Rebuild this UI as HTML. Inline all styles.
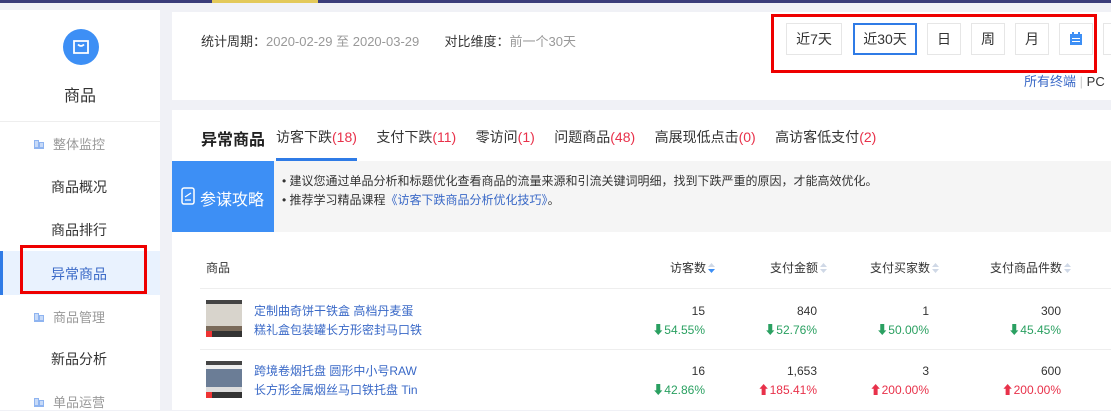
<!DOCTYPE html>
<html><head><meta charset="utf-8"><style>
*{margin:0;padding:0;box-sizing:border-box}
body{width:1111px;height:410px;overflow:hidden;background:#f0f1f6;font-family:"Liberation Sans","Noto Sans CJK SC",sans-serif;font-size:13px;color:#333;position:relative}
.a{position:absolute;white-space:nowrap}
.btn{position:absolute;top:23px;height:32px;border:1px solid #e6e6e6;background:#fff;text-align:center;line-height:30px;font-size:14px;color:#333}
.side{font-size:14px;color:#333}
.grp{font-size:13px;color:#999}
.ic{display:inline-block;margin-right:8px;vertical-align:-1px}
.g{color:#2aa061}.r{color:#e8314a}
.num{position:absolute;text-align:right;font-size:12px}
.blue{color:#3a69c7}
.so{display:inline-block;margin-left:2px;vertical-align:-1px}
</style></head><body>
<div class="a" style="left:0;top:0;width:1111px;height:3px;background:#3b3d7a"></div>
<div class="a" style="left:212px;top:0;width:106px;height:3px;background:#e3c95a"></div>
<!-- sidebar -->
<div class="a" style="left:0;top:10px;width:160px;height:400px;background:#fff"></div>
<div class="a" style="left:63px;top:29px;width:36px;height:36px;border-radius:50%;background:#3d8ff5"></div>
<svg class="a" style="left:71px;top:37px" width="20" height="20" viewBox="0 0 20 20"><path d="M3 4h14v12H3z" fill="none" stroke="#fff" stroke-width="1.8"/><path d="M7 7.5q3 3 6 0" fill="none" stroke="#fff" stroke-width="1.8"/></svg>
<div class="a" style="left:64px;top:82px;font-size:16px;color:#333">商品</div>
<div class="a" style="left:0;top:121px;width:160px;height:1px;background:#eee"></div>
<div class="a grp" style="left:33px;top:134px"><svg class="ic" width="12" height="12" viewBox="0 0 12 12"><path d="M1 2h5v9H1zM6 4h5v7H6z" fill="#8fb4f0"/><path d="M2 4h3M2 6h3M2 8h3M7 6h3M7 8h3" stroke="#fff"/></svg>整体监控</div>
<div class="a side" style="left:51px;top:177px">商品概况</div>
<div class="a side" style="left:51px;top:220px">商品排行</div>
<div class="a" style="left:0;top:251px;width:160px;height:44px;background:#e9f2fe"></div>
<div class="a" style="left:0;top:251px;width:3px;height:44px;background:#2f7be6"></div>
<div class="a side" style="left:51px;top:264px;color:#3a69c7">异常商品</div>
<div class="a" style="left:20px;top:245px;width:127px;height:49px;border:3px solid #e00"></div>
<div class="a grp" style="left:33px;top:307px"><svg class="ic" width="12" height="12" viewBox="0 0 12 12"><path d="M1 2h5v9H1zM6 4h5v7H6z" fill="#8fb4f0"/><path d="M2 4h3M2 6h3M2 8h3M7 6h3M7 8h3" stroke="#fff"/></svg>商品管理</div>
<div class="a side" style="left:51px;top:349px">新品分析</div>
<div class="a grp" style="left:33px;top:392px"><svg class="ic" width="12" height="12" viewBox="0 0 12 12"><path d="M1 2h5v9H1zM6 4h5v7H6z" fill="#8fb4f0"/><path d="M2 4h3M2 6h3M2 8h3M7 6h3M7 8h3" stroke="#fff"/></svg>单品运营</div>
<!-- card1 -->
<div class="a" style="left:172px;top:12px;width:939px;height:88px;background:#fff"></div>
<div class="a" style="left:201px;top:31px;font-size:13px">统计周期：<span style="color:#999">2020-02-29 至 2020-03-29</span>&nbsp;&nbsp;&nbsp;&nbsp;&nbsp;&nbsp;&nbsp;对比维度：<span style="color:#999">前一个30天</span></div>
<div class="btn" style="left:786px;width:56px">近7天</div>
<div class="btn" style="left:853px;width:64px;border:2px solid #2f7be6;line-height:28px">近30天</div>
<div class="btn" style="left:927px;width:34px">日</div>
<div class="btn" style="left:971px;width:34px">周</div>
<div class="btn" style="left:1015px;width:34px">月</div>
<div class="btn" style="left:1059px;width:34px"><svg width="14" height="14" viewBox="0 0 14 14" style="margin-top:8px"><rect x="1" y="2" width="12" height="11" fill="#3d8ff5"/><rect x="3" y="0" width="2" height="3" fill="#3d8ff5"/><rect x="9" y="0" width="2" height="3" fill="#3d8ff5"/><rect x="3" y="6" width="8" height="1" fill="#fff"/><rect x="3" y="9" width="8" height="1" fill="#fff"/></svg></div>
<div class="btn" style="left:1103px;width:34px"></div>
<div class="a" style="left:771px;top:14px;width:326px;height:59px;border:3px solid #e00"></div>
<div class="a" style="left:1024px;top:71px;font-size:13px"><span class="blue">所有终端</span> <span style="color:#ccc">|</span> PC</div>
<!-- card2 -->
<div class="a" style="left:172px;top:110px;width:939px;height:300px;background:#fff"></div>
<div class="a" style="left:201px;top:126px;font-size:16px;font-weight:bold;color:#222">异常商品</div>
<div class="a" style="left:276px;top:127px;font-size:14px">访客下跌<span class="r">(18)</span>&nbsp;&nbsp;&nbsp;&nbsp;&nbsp;支付下跌<span class="r">(11)</span>&nbsp;&nbsp;&nbsp;&nbsp;&nbsp;零访问<span class="r">(1)</span>&nbsp;&nbsp;&nbsp;&nbsp;&nbsp;问题商品<span class="r">(48)</span>&nbsp;&nbsp;&nbsp;&nbsp;&nbsp;高展现低点击<span class="r">(0)</span>&nbsp;&nbsp;&nbsp;&nbsp;&nbsp;高访客低支付<span class="r">(2)</span></div>
<div class="a" style="left:172px;top:161px;width:939px;height:71px;background:#f5f5f5"></div>
<div class="a" style="left:276px;top:158px;width:81px;height:3px;background:#2f7be6"></div>
<div class="a" style="left:172px;top:161px;width:102px;height:71px;background:#3d8ff5"></div>
<svg class="a" style="left:181px;top:187px" width="14" height="18" viewBox="0 0 14 18"><rect x="1" y="1" width="12" height="16" rx="2" fill="none" stroke="#fff" stroke-width="1.5"/><path d="M4 10l6-4M4 13h6" stroke="#fff" stroke-width="1.3"/></svg>
<div class="a" style="left:200px;top:186px;font-size:16px;color:#fff">参谋攻略</div>
<div class="a" style="left:282px;top:172px;font-size:12px;color:#333">• 建议您通过单品分析和标题优化查看商品的流量来源和引流关键词明细，找到下跌严重的原因，才能高效优化。</div>
<div class="a" style="left:282px;top:191px;font-size:12px;color:#333">• 推荐学习精品课程<span class="blue">《访客下跌商品分析优化技巧》</span>。</div>
<!-- table -->
<div class="a" style="left:206px;top:259px;font-size:12px">商品</div>
<div class="num" style="right:396px;top:259px">访客数<svg class="so" width="7" height="10" viewBox="0 0 7 10"><path d="M0 4L3.5 0L7 4z" fill="#cfd8e6"/><path d="M0 6L3.5 10L7 6z" fill="#3d8ff5"/></svg></div>
<div class="num" style="right:284px;top:259px">支付金额<svg class="so" width="7" height="10" viewBox="0 0 7 10"><path d="M0 4L3.5 0L7 4zM0 6L3.5 10L7 6z" fill="#cfd8e6"/></svg></div>
<div class="num" style="right:172px;top:259px">支付买家数<svg class="so" width="7" height="10" viewBox="0 0 7 10"><path d="M0 4L3.5 0L7 4zM0 6L3.5 10L7 6z" fill="#cfd8e6"/></svg></div>
<div class="num" style="right:40px;top:259px">支付商品件数<svg class="so" width="7" height="10" viewBox="0 0 7 10"><path d="M0 4L3.5 0L7 4zM0 6L3.5 10L7 6z" fill="#cfd8e6"/></svg></div>
<div class="a" style="left:200px;top:288px;width:911px;height:1px;background:#eee"></div>
<div class="a" style="left:200px;top:349px;width:911px;height:1px;background:#eee"></div>
<div class="a" style="left:206px;top:300px;width:36px;height:37px;background:linear-gradient(#444 0 4px,#d8d4cc 4px 26px,#7a6a5a 26px 31px,#333 31px);"></div>
<div class="a" style="left:206px;top:331px;width:6px;height:6px;background:#e33"></div>
<div class="a" style="left:206px;top:361px;width:36px;height:37px;background:linear-gradient(#444 0 4px,#eee 4px 8px,#6b7d96 8px 26px,#ddd 26px 31px,#333 31px);"></div>
<div class="a" style="left:206px;top:392px;width:6px;height:6px;background:#e33"></div>
<div class="a blue" style="left:254px;top:302px;font-size:12px;line-height:19px">定制曲奇饼干铁盒 高档丹麦蛋<br>糕礼盒包装罐长方形密封马口铁</div>
<div class="a blue" style="left:254px;top:362px;font-size:12px;line-height:19px">跨境卷烟托盘 圆形中小号RAW<br>长方形金属烟丝马口铁托盘 Tin</div>
<div class="num" style="right:406px;top:302px;line-height:19px">15<br><span class="g">⬇54.55%</span></div>
<div class="num" style="right:294px;top:302px;line-height:19px">840<br><span class="g">⬇52.76%</span></div>
<div class="num" style="right:182px;top:302px;line-height:19px">1<br><span class="g">⬇50.00%</span></div>
<div class="num" style="right:50px;top:302px;line-height:19px">300<br><span class="g">⬇45.45%</span></div>
<div class="num" style="right:406px;top:362px;line-height:19px">16<br><span class="g">⬇42.86%</span></div>
<div class="num" style="right:294px;top:362px;line-height:19px">1,653<br><span class="r">⬆185.41%</span></div>
<div class="num" style="right:182px;top:362px;line-height:19px">3<br><span class="r">⬆200.00%</span></div>
<div class="num" style="right:50px;top:362px;line-height:19px">600<br><span class="r">⬆200.00%</span></div>
</body></html>
